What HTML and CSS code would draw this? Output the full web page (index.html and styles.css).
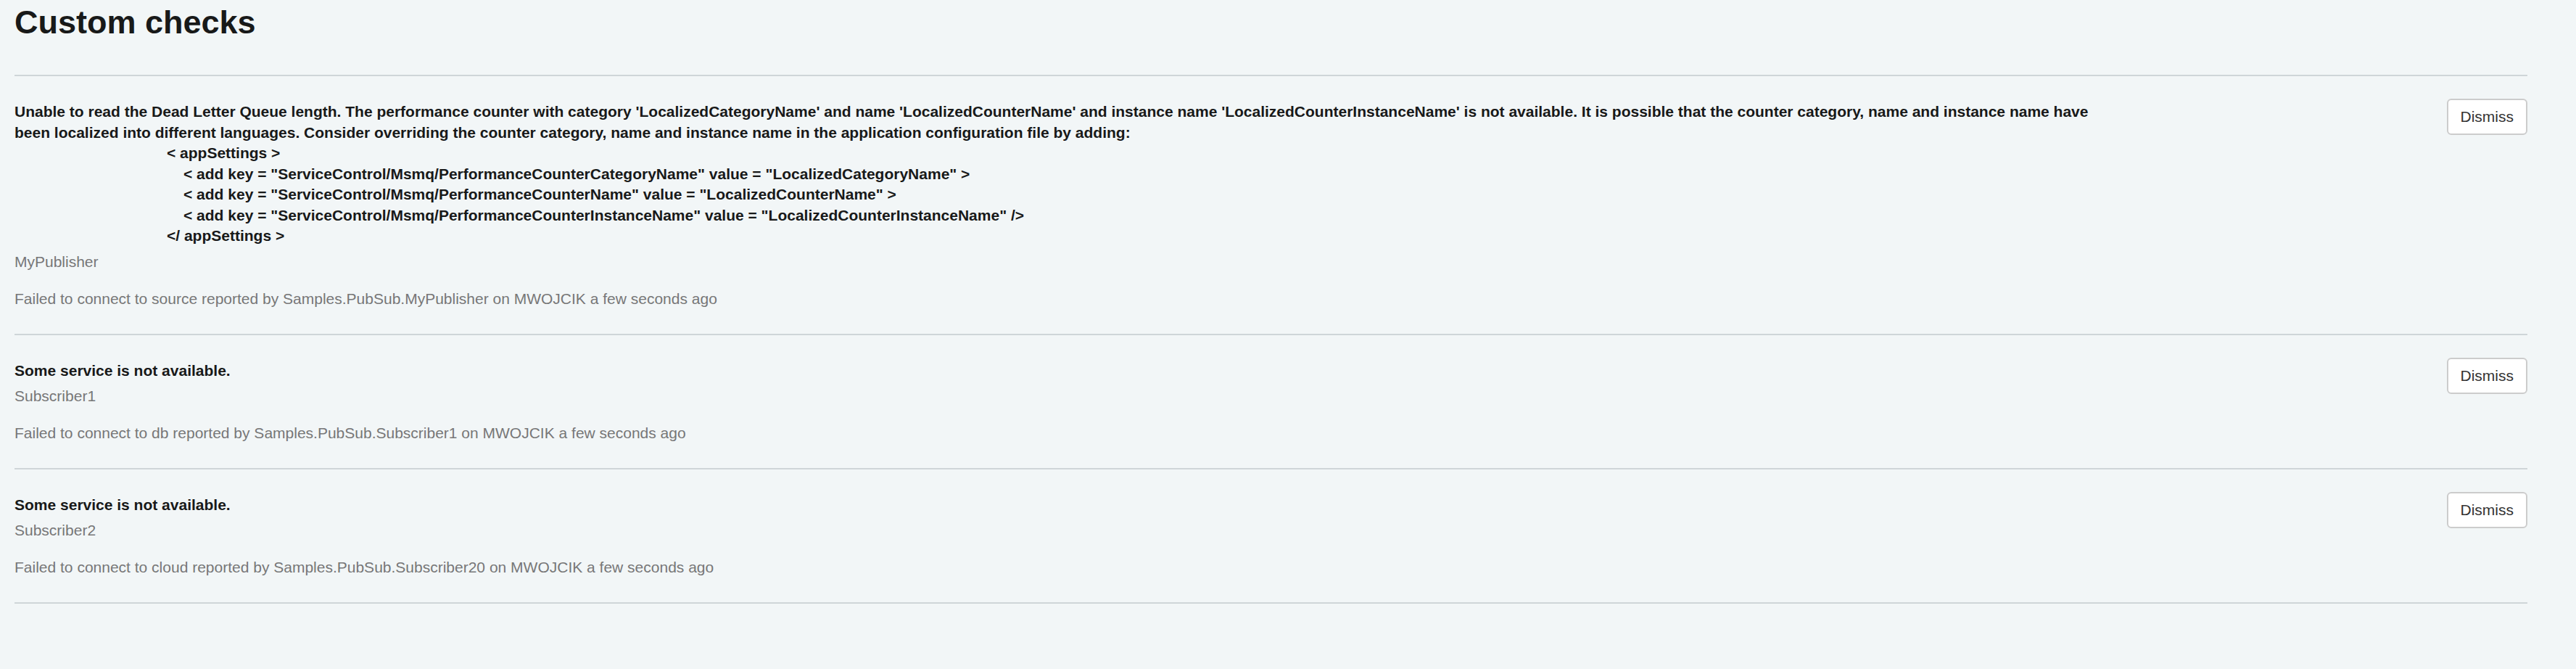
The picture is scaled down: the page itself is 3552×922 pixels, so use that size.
FILE: index.html
```html
<!DOCTYPE html>
<html lang="en">
<head>
<meta charset="utf-8">
<title>Custom checks</title>
<link rel="stylesheet" href="styles.css">
</head>
<body>
<div class="page">
  <h1 class="page-title">Custom checks</h1>
  <div class="checks">
    <div class="check">
      <div class="check-body">
        <div class="check-message">
          <p class="msg-text">Unable to read the Dead Letter Queue length. The performance counter with category 'LocalizedCategoryName' and name 'LocalizedCounterName' and instance name 'LocalizedCounterInstanceName' is not available. It is possible that the counter category, name and instance name have been localized into different languages. Consider overriding the counter category, name and instance name in the application configuration file by adding:</p>
          <div class="code-line indent-1">&lt; appSettings &gt;</div>
          <div class="code-line indent-2">&lt; add key = "ServiceControl/Msmq/PerformanceCounterCategoryName" value = "LocalizedCategoryName" &gt;</div>
          <div class="code-line indent-2">&lt; add key = "ServiceControl/Msmq/PerformanceCounterName" value = "LocalizedCounterName" &gt;</div>
          <div class="code-line indent-2">&lt; add key = "ServiceControl/Msmq/PerformanceCounterInstanceName" value = "LocalizedCounterInstanceName" /&gt;</div>
          <div class="code-line indent-1">&lt;/ appSettings &gt;</div>
        </div>
        <div class="check-category">MyPublisher</div>
        <div class="check-meta">Failed to connect to source reported by Samples.PubSub.MyPublisher on MWOJCIK a few seconds ago</div>
      </div>
      <button class="btn-dismiss" type="button">Dismiss</button>
    </div>
    <div class="check">
      <div class="check-body">
        <div class="check-message">
          <p class="msg-text">Some service is not available.</p>
        </div>
        <div class="check-category">Subscriber1</div>
        <div class="check-meta">Failed to connect to db reported by Samples.PubSub.Subscriber1 on MWOJCIK a few seconds ago</div>
      </div>
      <button class="btn-dismiss" type="button">Dismiss</button>
    </div>
    <div class="check">
      <div class="check-body">
        <div class="check-message">
          <p class="msg-text">Some service is not available.</p>
        </div>
        <div class="check-category">Subscriber2</div>
        <div class="check-meta">Failed to connect to cloud reported by Samples.PubSub.Subscriber20 on MWOJCIK a few seconds ago</div>
      </div>
      <button class="btn-dismiss" type="button">Dismiss</button>
    </div>
  </div>
</div>
</body>
</html>
```
FILE: styles.css
```css
html, body {
  margin: 0;
  padding: 0;
  background: #f2f6f7;
}

body {
  font-family: "Liberation Sans", Arial, Helvetica, sans-serif;
  font-size: 21px;
  line-height: 29px;
  color: #181919;
  min-height: 922px;
}

.page {
  padding: 6px 67px 0 20px;
}

.page-title {
  margin: 0 0 47px;
  font-size: 45px;
  line-height: 50px;
  font-weight: bold;
  color: #181919;
}

.checks {
  border-top: 2px solid #cfd5d8;
}

.check {
  display: flex;
  justify-content: space-between;
  align-items: flex-start;
  padding: 31px 0 34px;
  border-bottom: 2px solid #cfd5d8;
}

.check-body {
  flex: 0 0 2900px;
  padding-top: 3px;
}

.check-message {
  font-weight: bold;
  color: #181919;
  margin-bottom: 6px;
}

.msg-text {
  margin: 0;
}

.code-line {
  white-space: nowrap;
  line-height: 28.6px;
}

.indent-1 {
  padding-left: 210px;
}

.indent-2 {
  padding-left: 233px;
}

.check-category {
  color: #777;
  margin-bottom: 22px;
}

.check-meta {
  color: #777;
}

.btn-dismiss {
  font-family: "Liberation Sans", Arial, Helvetica, sans-serif;
  font-size: 21px;
  line-height: 30px;
  color: #333;
  background: #fff;
  border: 2px solid #ccc;
  border-radius: 6px;
  padding: 8px 17px;
  margin: 0;
  cursor: pointer;
}
```
